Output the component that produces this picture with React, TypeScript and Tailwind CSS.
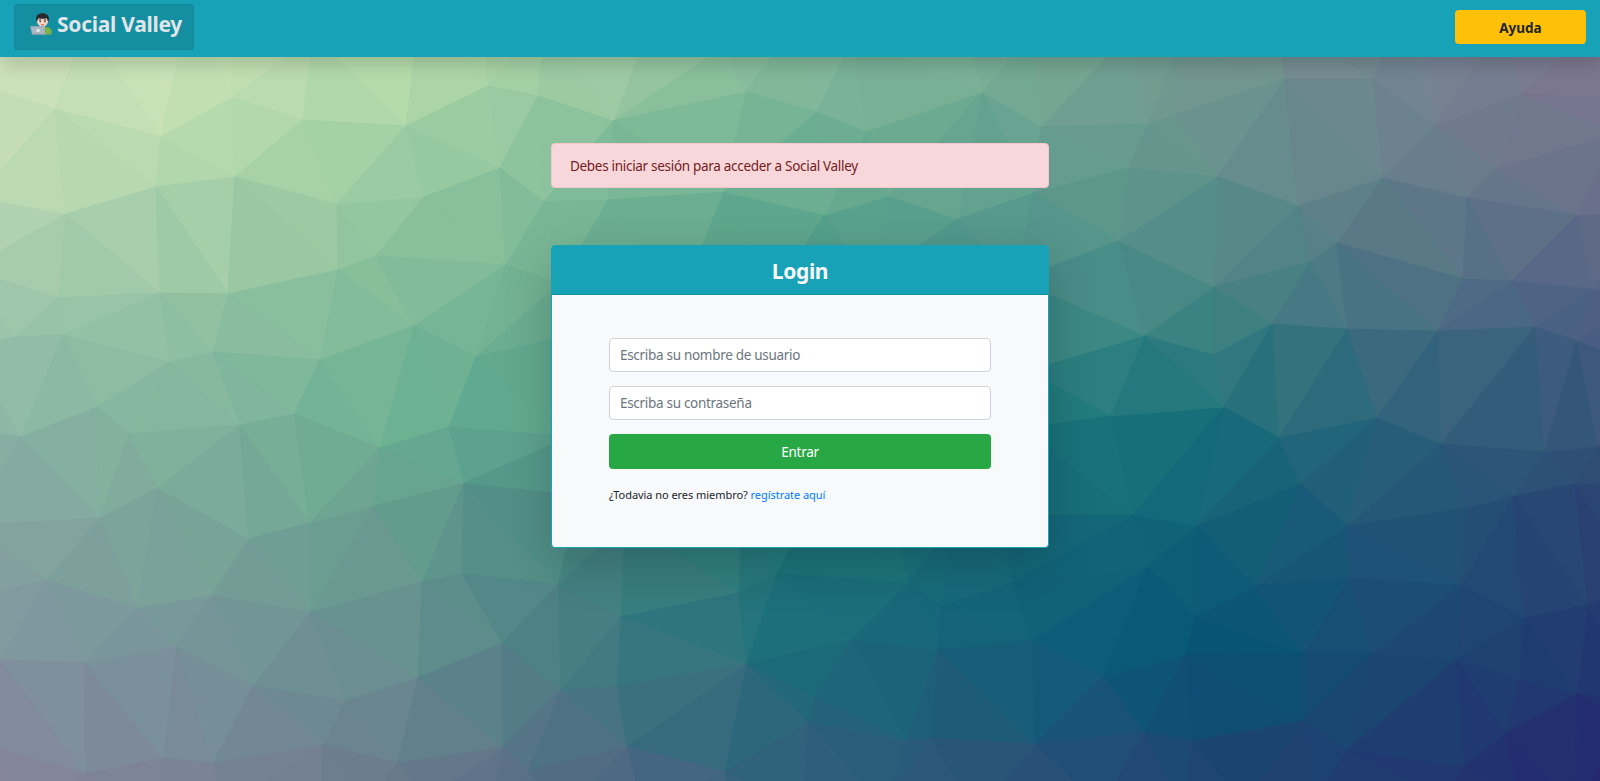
type Point = [number, number];

const VERTICES: Point[] = [
  // above the visible area
  [-60, -40], [-20, 85], [85, 25], [190, 5], [232, 30], [313, 37], [420, 10], [486, 5], [546, 20], [650, 25], [722, 48],
  [795, 24], [853, 37], [962, 15], [1034, 30], [1128, 35], [1178, 48], [1278, 20], [1395, 25], [1422, 12],
  [1490, 14], [1503, 25], [1595, 25], [1680, -40], [800, -60],
  // left margin
  [-23, 197], [-33, 270], [-30, 348], [-30, 430], [-31, 526], [-40, 600], [-30, 740], [-60, 840],
  // left
  [55, 109], [161, 137], [232, 98], [303, 120], [156, 187], [235, 177], [337, 204], [66, 214], [59, 298], [63, 335],
  [15, 337], [160, 293], [228, 294], [376, 256], [338, 270], [320, 360], [213, 352], [170, 362], [97, 407], [294, 414],
  [21, 437], [100, 518], [129, 434], [158, 488], [47, 580], [138, 608], [211, 596], [249, 539], [240, 425], [310, 523],
  [311, 612], [380, 448], [374, 506], [176, 647], [253, 686], [346, 701], [163, 758], [213, 763], [323, 745], [398, 763],
  [1, 660], [84, 663], [85, 774],
  // centre
  [406, 126], [488, 86], [538, 96], [613, 121], [746, 92], [500, 168], [424, 197], [544, 202], [608, 200], [724, 192],
  [506, 265], [414, 326], [476, 357], [449, 427], [464, 483], [422, 582], [462, 574], [502, 643], [418, 678], [503, 747],
  [528, 771], [561, 690], [558, 584], [621, 616], [617, 686], [627, 747], [738, 592], [747, 664], [777, 573], [725, 772],
  [560, 283], [600, 328], [570, 437], [580, 495], [625, 522], [680, 300], [775, 290], [870, 280], [650, 400], [740, 390],
  [840, 380], [930, 370], [700, 470], [742, 495], [810, 513], [885, 490], [957, 515],
  // right of centre
  [817, 112], [867, 132], [982, 93], [1041, 127], [1148, 124], [1176, 115], [1129, 168], [1034, 193], [958, 219],
  [889, 196], [825, 215], [1119, 241], [1145, 336], [1015, 280], [1028, 371], [1025, 428], [1000, 515],
  [852, 640], [909, 583], [940, 606], [938, 650], [1012, 583], [1032, 641], [1148, 566], [1133, 515], [1111, 416],
  [1197, 526], [1195, 616], [1185, 655], [1103, 677], [815, 697], [808, 722], [906, 741], [932, 738], [1035, 744],
  [1144, 732], [1192, 741],
  // right
  [1285, 79], [1373, 79], [1435, 126], [1522, 94], [1218, 177], [1298, 206], [1383, 178], [1467, 198], [1497, 169],
  [1577, 215], [1337, 243], [1310, 262], [1214, 287], [1463, 279], [1511, 281], [1593, 289], [1272, 324], [1347, 329],
  [1438, 331], [1535, 327], [1577, 341], [1214, 355], [1224, 407], [1279, 438], [1301, 484], [1348, 526], [1377, 418],
  [1441, 444], [1467, 508], [1514, 496], [1544, 452], [1575, 484], [1256, 586], [1349, 578], [1461, 585], [1524, 618],
  [1588, 605], [1304, 654], [1371, 654], [1457, 659], [1519, 680], [1577, 694], [1304, 721], [1346, 750], [1506, 733],
  [1464, 767], [1598, 447],
  // right margin
  [1640, 100], [1618, 133], [1640, 212], [1640, 300], [1632, 360], [1640, 420], [1640, 487], [1640, 585], [1640, 697],
  [1630, 720],
  // below the visible area
  [40, 808], [152, 815], [222, 810], [322, 830], [365, 806], [425, 800], [487, 812], [562, 810], [642, 812], [725, 835],
  [803, 812], [885, 812], [972, 816], [1100, 808], [1183, 812], [1243, 806], [1298, 818], [1315, 803], [1445, 798],
  [1520, 812], [1575, 806], [1680, 840], [800, 900],
];

// Colours sampled every 200px across and 120px down, starting at (0, 60).
const PALETTE: string[][] = [
  ["cfe3bc", "c5e1b3", "b3daa9", "9ecba3", "82b89a", "78ad96", "74988f", "748592", "7d7690"],
  ["bcd9b4", "afd6ab", "99caa1", "7cb997", "68ad91", "62a08f", "61918c", "667f8b", "6c718a"],
  ["9fc7ac", "94c3a3", "82bc99", "68aa8f", "4b9a88", "47908a", "458684", "4a7083", "506085"],
  ["8ab5a5", "81b59d", "6bb092", "529f8c", "318887", "1f7c7c", "17707a", "2d627a", "335478"],
  ["84a3a0", "79a498", "669a8e", "448482", "1e787b", "16697a", "0e5f77", "215376", "294272"],
  ["8094a0", "76939a", "678e8f", "437981", "1b6a79", "135f79", "045475", "1b4873", "213870"],
  ["85849b", "7a8496", "697a8d", "4f6983", "2f607c", "2b5278", "1e4574", "203a70", "25276f"],
];

function mix(a: number[], b: number[], t: number) {
  return a.map((v, i) => v + (b[i] - v) * t);
}

function parse(hex: string) {
  return [0, 2, 4].map((i) => parseInt(hex.slice(i, i + 2), 16));
}

function colourAt(x: number, y: number) {
  const gx = Math.min(7.999, Math.max(0, x / 200));
  const gy = Math.min(5.999, Math.max(0, (y - 60) / 120));
  const c = Math.floor(gx);
  const r = Math.floor(gy);
  const top = mix(parse(PALETTE[r][c]), parse(PALETTE[r][c + 1]), gx - c);
  const bottom = mix(parse(PALETTE[r + 1][c]), parse(PALETTE[r + 1][c + 1]), gx - c);
  return `rgb(${mix(top, bottom, gy - r).map(Math.round).join(",")})`;
}

// Bowyer-Watson Delaunay triangulation.
function triangulate(source: Point[]) {
  const pts: Point[] = [...source, [-20000, -20000], [20000, -20000], [0, 30000]];
  const n = source.length;
  const make = (a: number, b: number, c: number) => {
    const [ax, ay] = pts[a];
    const [bx, by] = pts[b];
    const [cx, cy] = pts[c];
    const d = 2 * (ax * (by - cy) + bx * (cy - ay) + cx * (ay - by));
    const a2 = ax * ax + ay * ay;
    const b2 = bx * bx + by * by;
    const c2 = cx * cx + cy * cy;
    const x = (a2 * (by - cy) + b2 * (cy - ay) + c2 * (ay - by)) / d;
    const y = (a2 * (cx - bx) + b2 * (ax - cx) + c2 * (bx - ax)) / d;
    return { v: [a, b, c], x, y, r: (ax - x) ** 2 + (ay - y) ** 2 };
  };
  let tris = [make(n, n + 1, n + 2)];
  for (let i = 0; i < n; i++) {
    const [px, py] = pts[i];
    const edges = new Map<string, [number, number]>();
    tris = tris.filter((t) => {
      if ((px - t.x) ** 2 + (py - t.y) ** 2 >= t.r) return true;
      for (let k = 0; k < 3; k++) {
        const a = t.v[k];
        const b = t.v[(k + 1) % 3];
        const key = a < b ? `${a}-${b}` : `${b}-${a}`;
        if (edges.has(key)) edges.delete(key);
        else edges.set(key, [a, b]);
      }
      return false;
    });
    edges.forEach(([a, b]) => tris.push(make(a, b, i)));
  }
  return tris.filter((t) => t.v.every((k) => k < n)).map((t) => t.v.map((k) => pts[k]));
}

const TRIANGLES = triangulate(VERTICES).map((t) => ({
  points: t.map((p) => p.join(",")).join(" "),
  fill: colourAt((t[0][0] + t[1][0] + t[2][0]) / 3, (t[0][1] + t[1][1] + t[2][1]) / 3),
}));

function Backdrop() {
  return (
    <svg className="absolute inset-0 h-full w-full" viewBox="0 0 1600 781" preserveAspectRatio="xMidYMid slice" aria-hidden="true">
      {TRIANGLES.map((t) => (
        <polygon key={t.points} points={t.points} fill={t.fill} stroke={t.fill} strokeWidth="0.8" />
      ))}
    </svg>
  );
}

function Technologist() {
  return (
    <svg className="h-[22px] w-[22px] shrink-0" viewBox="0 0 22 22" aria-hidden="true">
      <path d="M12 21.500v-4c0-2.400 2-3.200 4.500-3.200s5 1.500 5 4v3.200z" fill="#7cb342" />
      <path d="M11 12h4v3.500l-2 1.500-2-1.500z" fill="#e6b8a0" />
      <ellipse cx="12.500" cy="7.800" rx="5.600" ry="5.800" fill="#f8d9c8" />
      <path d="M6.200 7.500C5.500 2.800 8.500.3 12.500.3s7.200 2.400 6.300 7.200l-1.200.3-.8-2.600c-2.600.7-6 .7-8.500 0l-.9 2.600z" fill="#26282b" />
      <path d="M8.800 7h2.400M13.800 7h2.400" stroke="#3b2f2b" strokeWidth="1" />
      <circle cx="10.200" cy="8.600" r=".8" fill="#5a3b30" />
      <circle cx="15" cy="8.600" r=".8" fill="#5a3b30" />
      <path d="M11 11.400c1 .7 2.200.7 3.200 0" stroke="#c3453c" strokeWidth="1" fill="none" />
      <path d="M.3 13.300h13.400l2 8.400H2.300z" fill="#a9b8c4" stroke="#8d9ca8" strokeWidth=".5" />
      <path d="M2.300 20.700h14.200v1.100H2.300z" fill="#8796a2" />
      <circle cx="8" cy="17.400" r="1.700" fill="#e4ebf0" />
    </svg>
  );
}

function Field({ placeholder, type }: { placeholder: string; type: string }) {
  return (
    <input
      type={type}
      placeholder={placeholder}
      className="block h-[34px] w-full rounded-[4px] border border-[#ced4da] bg-white px-[10px] text-[13.5px] tracking-[-0.3px] text-[#495057] outline-none placeholder:text-[#6c757d] placeholder:opacity-100"
    />
  );
}

export default function App() {
  return (
    <div className="relative isolate flex h-screen min-h-[781px] flex-col overflow-hidden bg-[#5ba58c] font-['Noto_Sans','Open_Sans',sans-serif] text-[14px] text-[#212529]">
      <Backdrop />

      <nav className="relative flex h-[57px] shrink-0 items-start justify-between bg-[#17a2b8] px-[14px] shadow-[0_8px_16px_rgba(0,0,0,0.15)]">
        <a href="#" className="mt-1 flex h-[46px] w-[180px] items-start rounded-[4px] border border-black/5 bg-black/12 pt-2 pl-[15px]">
          <Technologist />
          <span className="ml-[5px] whitespace-nowrap text-[21px] leading-[22px] font-bold tracking-[-0.27px] text-[#dfe5e8]">Social Valley</span>
        </a>
        <button className="mt-[10px] h-[34px] w-[131px] rounded-[4px] bg-[#ffc107] pt-[3px] text-[13.5px] font-bold text-[#212529]">Ayuda</button>
      </nav>

      <main className="relative mx-auto flex w-[498px] flex-col pt-[86px]">
        <div className="flex h-[45px] items-center rounded-[4px] border border-[#f5c6cb] bg-[#f8d7da] px-[18px] pt-[2px] text-[13.5px] tracking-[-0.3px] whitespace-nowrap text-[#721c24]">
          Debes iniciar sesión para acceder a Social Valley
        </div>

        <section className="mt-[57px] flex h-[303px] flex-col rounded-[4px] border border-[#17a2b8] bg-[#f8f9fa] shadow-[0_16px_48px_rgba(0,0,0,0.19)]">
          <header className="flex h-[49px] items-center justify-center border-b border-[#1592a6] bg-[#17a2b8] pt-[2px]">
            <h1 className="text-[21px] leading-[26px] font-bold tracking-[-0.35px] text-[#f8f9fa]">Login</h1>
          </header>
          <form className="flex flex-col gap-[14px] px-[57px] pt-[43px]">
            <Field type="text" placeholder="Escriba su nombre de usuario" />
            <Field type="password" placeholder="Escriba su contraseña" />
            <button type="button" className="h-[35px] w-full rounded-[4px] bg-[#28a745] pt-[2px] text-[13.5px] tracking-[-0.25px] text-white">
              Entrar
            </button>
            <p className="mt-[3px] text-[11px] leading-[18px] tracking-[-0.05px] whitespace-nowrap">
              ¿Todavia no eres miembro?{" "}
              <a href="#" className="text-[#007bff]">
                regístrate aquí
              </a>
            </p>
          </form>
        </section>
      </main>
    </div>
  );
}
